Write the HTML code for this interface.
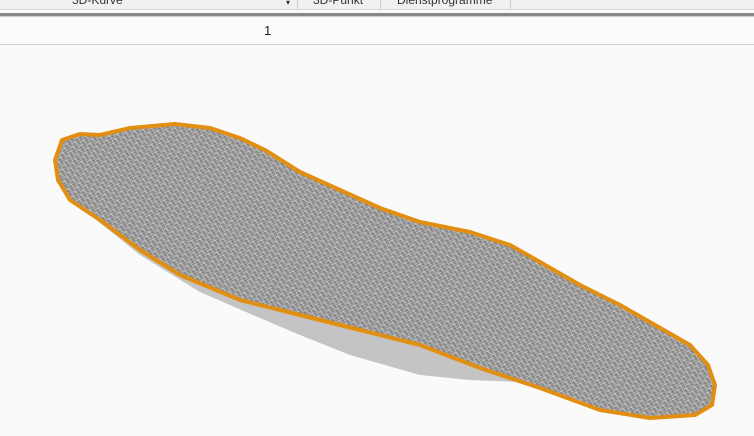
<!DOCTYPE html>
<html><head><style>
body{margin:0;width:754px;height:436px;background:#fafafa;overflow:hidden;font-family:"Liberation Sans",sans-serif;position:relative}
.tabs{position:absolute;left:0;top:0;width:754px;height:9px;background:#eef0f2;border-bottom:1px solid #d8d8d8}
.t{position:absolute;top:-7px;font-size:12px;color:#333}
.sep{position:absolute;top:0;height:9px;border-left:1px solid #ccc}
.line{position:absolute;left:0;top:13px;width:754px;height:3px;background:#888;border-bottom:1px solid #ccc}
.row{position:absolute;left:0;top:17px;width:754px;height:27px;background:#fbfbfb;border-bottom:1px solid #cfcfcf}
</style></head><body>
<div class="tabs">
<span class="t" style="left:72px">3D-Kurve</span>
<span class="t" style="left:286px;font-size:8px;top:-2px">▾</span>
<div class="sep" style="left:297px"></div>
<span class="t" style="left:313px">3D-Punkt</span>
<div class="sep" style="left:380px"></div>
<span class="t" style="left:397px">Dienstprogramme</span>
<div class="sep" style="left:510px"></div>
</div>
<div class="line"></div>
<div class="row"><span style="position:absolute;left:264px;top:6px;font-size:13px;color:#222">1</span></div>
<svg width="754" height="436" style="position:absolute;left:0;top:0">
<defs>
<pattern id="m" width="7" height="5" patternUnits="userSpaceOnUse" patternTransform="rotate(25)">
<rect width="7" height="5" fill="#888"/>
<path d="M0 0L7 5M0 5L4 0M0 2.5H7" stroke="#cfcfcf" stroke-width="0.6"/>
</pattern>
</defs>
<path d="M90 215 L140 255 L200 292 L260 318 L300 335 L350 355 L420 375 L470 380 L520 382 L480 366 L420 345 L360 330 L300 315 L240 300 L180 275 L140 250Z" fill="#c4c4c4"/>
<path d="M62 140 L80 134 L100 135 L130 128 L175 124 L210 128 L240 138 L265 150 L300 172 L340 190 L380 208 L420 222 L470 232 L510 245 L540 262 L580 285 L620 305 L655 325 L690 345 L708 365 L715 385 L712 405 L695 415 L650 418 L600 410 L540 388 L480 368 L420 345 L360 330 L300 315 L240 300 L180 275 L140 250 L100 220 L70 200 L58 180 L55 160Z" fill="url(#m)" stroke="#e28e10" stroke-width="4" stroke-linejoin="round"/>
</svg>
</body></html>
